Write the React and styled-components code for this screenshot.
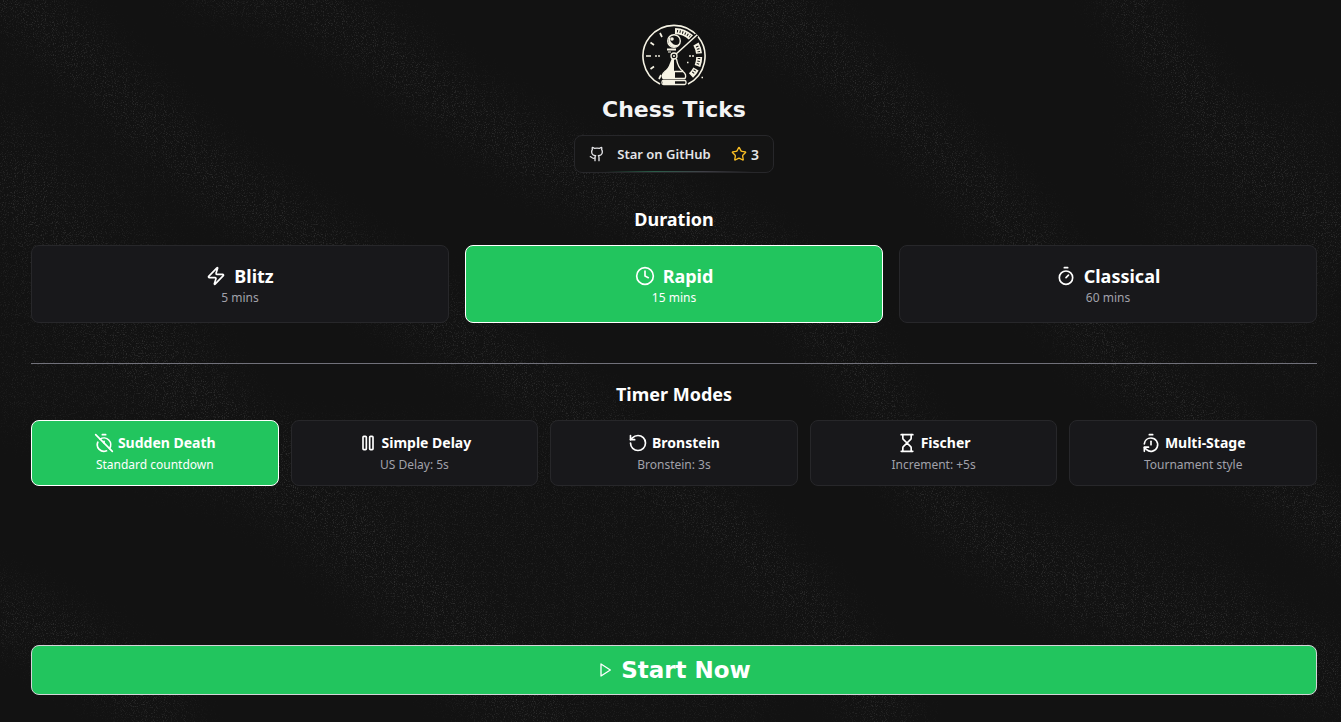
import React, { useState } from 'react'
import styled, { createGlobalStyle } from 'styled-components'
import { Clock, Github, Hourglass, RotateCcw, Star, Timer, TimerOff, TimerReset, Zap } from 'lucide-react'

const PauseBars = ({ size }) => (
  <svg
    width={size}
    height={size}
    viewBox="0 0 24 24"
    fill="none"
    stroke="currentColor"
    strokeWidth="2"
    strokeLinejoin="round"
    aria-hidden="true"
  >
    <rect x="14" y="4" width="4" height="16" rx="1" />
    <rect x="6" y="4" width="4" height="16" rx="1" />
  </svg>
)

const durations = [
  { id: 'blitz', name: 'Blitz', detail: '5 mins', Icon: Zap },
  { id: 'rapid', name: 'Rapid', detail: '15 mins', Icon: Clock },
  { id: 'classical', name: 'Classical', detail: '60 mins', Icon: Timer },
]

const modes = [
  { id: 'sudden', name: 'Sudden Death', detail: 'Standard countdown', Icon: TimerOff },
  { id: 'delay', name: 'Simple Delay', detail: 'US Delay: 5s', Icon: PauseBars },
  { id: 'bronstein', name: 'Bronstein', detail: 'Bronstein: 3s', Icon: RotateCcw },
  { id: 'fischer', name: 'Fischer', detail: 'Increment: +5s', Icon: Hourglass },
  { id: 'stage', name: 'Multi-Stage', detail: 'Tournament style', Icon: TimerReset },
]

const GlobalStyle = createGlobalStyle`
  * {
    box-sizing: border-box;
  }

  body {
    margin: 0;
    background: #121212;
    color: #fff;
    font-family: 'Noto Sans', 'Open Sans', sans-serif;
  }

  button {
    font-family: inherit;
    color: inherit;
    cursor: pointer;
  }
`

// faint grain that shows only along soft diagonal bands
const GrainBackdrop = () => (
  <Grain viewBox="0 0 1341 722" preserveAspectRatio="xMidYMid slice" aria-hidden="true">
    <defs>
      <filter id="grain" x="0" y="0" width="100%" height="100%">
        <feTurbulence type="fractalNoise" baseFrequency="0.9" numOctaves="2" seed="4" />
        <feColorMatrix values="0 0 0 0 1  0 0 0 0 1  0 0 0 0 1  4 0 0 0 -2.1" />
      </filter>
      <filter id="soft" x="-20%" y="-20%" width="140%" height="140%">
        <feGaussianBlur stdDeviation="22" />
      </filter>
      <mask id="bands">
        <g filter="url(#soft)" fill="none" stroke="#fff" strokeWidth="60">
          <path d="M-20 -20 C60 20 120 110 220 180 S430 310 540 390 S800 560 900 740" />
          <path d="M180 -30 C300 -10 360 30 420 80 S620 200 720 240 S860 370 920 470 S1120 600 1370 690" />
          <path d="M700 -30 C800 20 900 110 980 190 S1080 340 1160 390 S1280 500 1380 550" />
          <path d="M1120 -30 C1160 80 1260 180 1380 260" />
          <path d="M0 160 C40 220 100 320 180 390 S420 560 560 740" />
          <path d="M-40 600 C40 620 120 660 180 740" />
        </g>
        <g filter="url(#soft)" fill="#fff" opacity="0.5">
          <path d="M-20 60L140 180 260 420 560 430 800 640 760 740 480 740 260 520 -20 420z" />
          <path d="M1120 120L1341 100V420L1200 360z" />
          <path d="M960 500L1180 520 1341 640V680L1060 640z" />
        </g>
      </mask>
    </defs>
    <g mask="url(#bands)">
      <rect width="1341" height="722" filter="url(#grain)" opacity="0.12" />
    </g>
  </Grain>
)

const Logo = () => (
  <svg width="64" height="64" viewBox="0 0 64 64" fill="none" stroke="#f6f3e4" aria-hidden="true">
    <path d="M18 60A31 31 0 1 1 46 60" strokeWidth="1.6" />
    <path d="M18 9l2 4M8.500 18.500l3.500 2.500M4 32h5M8.500 45l3.500-2.500M17 55l2-4" strokeWidth="1.7" />
    <path d="M33 7A25 25 0 0 1 49 13.500" strokeWidth="6" />
    <path d="M54 20A25 25 0 0 1 57 29.500M57.200 33A25 25 0 0 1 55.500 42M54 45A25 25 0 0 1 49 51.500" strokeWidth="6" />
    <path
      d="M35 7.200A25 25 0 0 1 48 12.500M55 22A25 25 0 0 1 57 29M57 34A25 25 0 0 1 55.500 41M53 46A25 25 0 0 1 50 50"
      stroke="#121212"
      strokeWidth="2.6"
      strokeDasharray="1 1.700"
    />
    <path d="M33 31L55 11" stroke="#121212" strokeWidth="4" />
    <path d="M33 31L55 11" strokeWidth="1.500" />
    <circle cx="32" cy="17" r="6.300" strokeWidth="1.400" />
    <path d="M29 12a6 6 0 1 0 9 7a5 5 0 0 1-8 0a5 5 0 0 1-1-7z" fill="#f6f3e4" stroke="none" />
    <circle cx="30" cy="15" r="1.800" fill="#f6f3e4" stroke="none" />
    <path d="M25 25.500h9" strokeWidth="2" />
    <path d="M26 28h3" strokeWidth="1" />
    <path d="M30 34L28 39Q26 45 22 47.500h10V34z" fill="#f6f3e4" stroke="none" />
    <path d="M34.500 35Q36 44 41 47" strokeWidth="1.400" />
    <circle cx="32" cy="32" r="3" fill="#121212" strokeWidth="1.300" />
    <circle cx="32" cy="32" r="1" fill="#f6f3e4" stroke="none" />
    <path d="M23 47.500h18q4 3 2 7H21q-2-4 2-7z" fill="#121212" strokeWidth="1.300" />
    <path d="M23 48h10v6.500H21q-2-4 2-6.500z" fill="#f6f3e4" stroke="none" />
    <rect x="20" y="56.500" width="24" height="4" rx="1.500" fill="#121212" strokeWidth="1.300" />
    <path d="M21 56h12v4.500H21z" fill="#f6f3e4" stroke="none" />
    <path d="M13 32h2M16 32h2M47 32h2M50 32h2" strokeWidth="1.800" opacity="0.7" />
    <path d="M45 38.500h1.500M59.500 53.500h1.500" strokeWidth="1.400" />
  </svg>
)

const Choice = ({ item, selected, onSelect, compact }) => {
  const { id, name, detail, Icon } = item

  return (
    <ChoiceButton type="button" aria-pressed={selected} $selected={selected} $compact={compact} onClick={() => onSelect(id)}>
      <ChoiceName $compact={compact}>
        <Icon size={20} />
        <span>{name}</span>
      </ChoiceName>
      <ChoiceDetail $selected={selected}>{detail}</ChoiceDetail>
    </ChoiceButton>
  )
}

const App = () => {
  const [duration, setDuration] = useState('rapid')
  const [mode, setMode] = useState('sudden')

  return (
    <Page>
      <GlobalStyle />
      <GrainBackdrop />
      <Header>
        <Logo />
        <Title>Chess Ticks</Title>
        <GithubLink href="#github">
          <Github size={16} />
          <span>Star on GitHub</span>
          <Stars>
            <Star size={16} color="#fbbf24" />
            3
          </Stars>
        </GithubLink>
      </Header>
      <Section>
        <SectionTitle>Duration</SectionTitle>
        <DurationGrid>
          {durations.map((item) => (
            <Choice key={item.id} item={item} selected={duration === item.id} onSelect={setDuration} />
          ))}
        </DurationGrid>
      </Section>
      <Divider />
      <Section>
        <SectionTitle>Timer Modes</SectionTitle>
        <ModeGrid>
          {modes.map((item) => (
            <Choice key={item.id} item={item} selected={mode === item.id} onSelect={setMode} compact />
          ))}
        </ModeGrid>
      </Section>
      <StartButton type="button">
        <svg
          width="16"
          height="16"
          viewBox="0 0 24 24"
          fill="none"
          stroke="currentColor"
          strokeWidth="2"
          strokeLinejoin="round"
          aria-hidden="true"
        >
          <path d="M6 3l14 9-14 9z" />
        </svg>
        Start Now
      </StartButton>
    </Page>
  )
}

const Page = styled.main`
  position: relative;
  isolation: isolate;
  display: flex;
  flex-direction: column;
  min-height: 100vh;
  padding: 24px 24px 27px 31px;
`

const Grain = styled.svg`
  position: absolute;
  inset: 0;
  z-index: -1;
  width: 100%;
  height: 100%;
`

const Header = styled.header`
  display: flex;
  flex-direction: column;
  align-items: center;
  margin-bottom: 32px;
`

const Title = styled.h1`
  margin: 8px 0 11px;
  font-family: 'DejaVu Sans', sans-serif;
  font-size: 22px;
  font-weight: 700;
  line-height: 28px;
  color: #f4f4f5;
`

const GithubLink = styled.a`
  display: flex;
  align-items: center;
  justify-content: space-between;
  width: 200px;
  height: 38px;
  padding: 0 14px;
  border: 1px solid #27272a;
  border-radius: 8px;
  background:
    linear-gradient(90deg, transparent 15%, #2b5d49 40%, #3f3f46 65%, transparent 90%) bottom / 100% 1px no-repeat,
    #141414;
  color: #e4e4e7;
  font-size: 13px;
  font-weight: 600;
  text-decoration: none;
`

const Stars = styled.span`
  display: flex;
  align-items: center;
  gap: 4px;
  margin-left: 8px;
  font-size: 14px;
`

const Section = styled.section`
  display: flex;
  flex-direction: column;
`

const SectionTitle = styled.h2`
  margin: 0 0 12px;
  font-size: 18px;
  font-weight: 700;
  line-height: 28px;
  text-align: center;
`

const DurationGrid = styled.div`
  display: grid;
  grid-template-columns: repeat(3, 1fr);
  gap: 16px;
`

const ModeGrid = styled.div`
  display: grid;
  grid-template-columns: repeat(5, 1fr);
  gap: 12px;
`

const ChoiceButton = styled.button`
  display: flex;
  flex-direction: column;
  align-items: center;
  gap: ${({ $compact }) => ($compact ? 4 : 0)}px;
  padding: ${({ $compact }) => ($compact ? 12 : 16)}px;
  border: 1px solid ${({ $selected }) => ($selected ? '#fff' : '#27272a')};
  border-radius: 8px;
  background: ${({ $selected }) => ($selected ? '#22c55e' : '#18181b')};
`

const ChoiceName = styled.span`
  display: flex;
  align-items: center;
  gap: ${({ $compact }) => ($compact ? 4 : 8)}px;
  font-size: ${({ $compact }) => ($compact ? 14 : 18)}px;
  font-weight: 700;
  line-height: ${({ $compact }) => ($compact ? 20 : 28)}px;
`

const ChoiceDetail = styled.span`
  color: ${({ $selected }) => ($selected ? '#fff' : '#a1a1aa')};
  font-size: 12px;
  line-height: 16px;
`

const Divider = styled.hr`
  width: 100%;
  height: 1px;
  margin: 40px 0 16px;
  border: 0;
  background: #71717a;
`

const StartButton = styled.button`
  display: flex;
  align-items: center;
  justify-content: center;
  gap: 8px;
  height: 50px;
  margin-top: auto;
  border: 1px solid #d4d4d8;
  border-radius: 8px;
  background: #22c55e;
  font-family: 'DejaVu Sans', sans-serif;
  font-size: 23px;
  font-weight: 700;
`

export default App
